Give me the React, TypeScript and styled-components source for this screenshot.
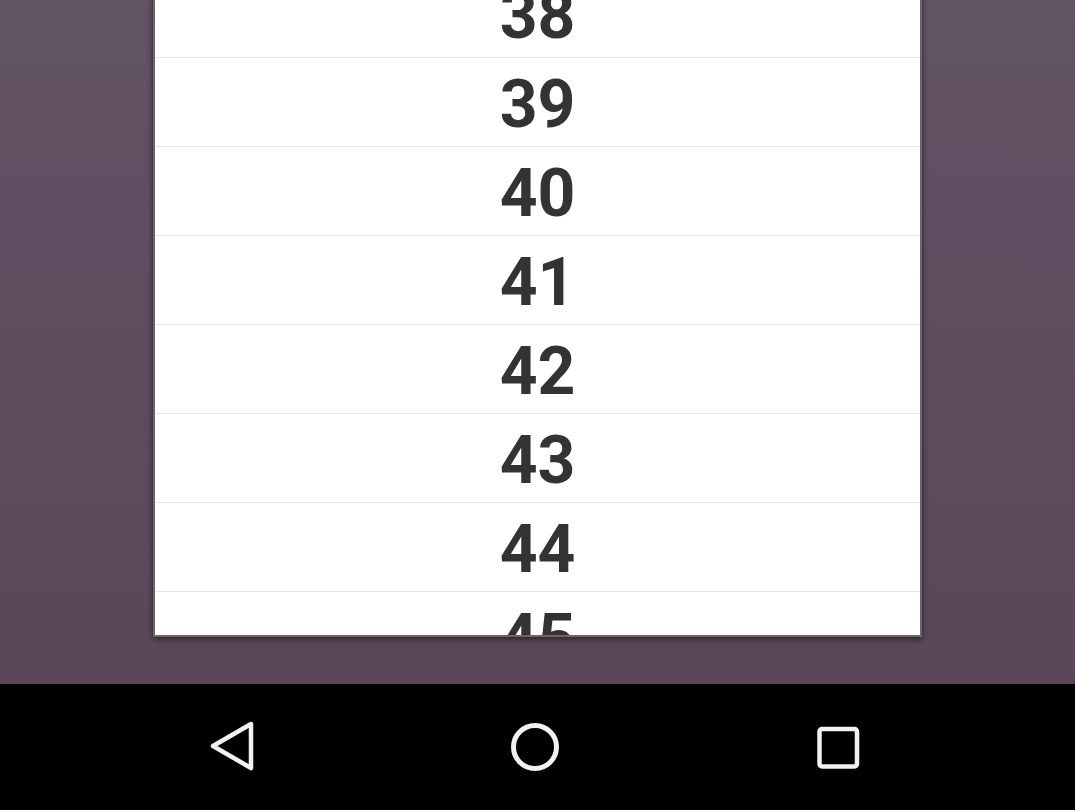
import React from "react";
import styled, { createGlobalStyle } from "styled-components";

const Global = createGlobalStyle`
  html, body { margin: 0; padding: 0; }
  body { font-family: Roboto, "Noto Sans", sans-serif; background: #000; }
`;

const Screen = styled.div`
  width: 1075px;
  height: 810px;
  display: flex;
  flex-direction: column;
  overflow: hidden;
`;

const Content = styled.div`
  height: 684px;
  flex: none;
  display: flex;
  flex-direction: column;
  justify-content: flex-end;
  align-items: flex-start;
  padding: 0 0 47px 153px;
  box-sizing: border-box;
  overflow: hidden;
  background: linear-gradient(180deg, #625365 0%, #5e4c5f 50%, #5a4659 100%);
`;

const Card = styled.div`
  flex: none;
  width: 765px;
  height: 666px;
  background: #fff;
  border: 2px solid #6a666a;
  border-top: none;
  box-shadow: 0 3px 6px rgba(0, 0, 0, 0.35), 0 0 5px rgba(0, 0, 0, 0.3);
  overflow: hidden;
  display: flex;
  flex-direction: column;
`;

const Row = styled.div`
  flex: none;
  height: 82px;
  padding-top: 6px;
  border-bottom: 1px solid #e4e4e4;
  display: flex;
  align-items: center;
  justify-content: center;
  font-family: Roboto, "Noto Sans", sans-serif;
  font-weight: 700;
  font-size: 66px;
  color: #333333;
  line-height: 1;
`;

const Nav = styled.div`
  flex: 1;
  background: #000;
  display: flex;
  align-items: center;
  padding-left: 182px;
  gap: 203px;
`;

const NavButton = styled.div`
  width: 100px;
  height: 100px;
  display: flex;
  align-items: center;
  justify-content: center;
`;

const numbers = [38, 39, 40, 41, 42, 43, 44, 45];

export default function App() {
  return (
    <>
      <Global />
      <Screen>
        <Content>
          <Card>
            {numbers.map((n) => (
              <Row key={n}>{n}</Row>
            ))}
          </Card>
        </Content>
        <Nav>
          <NavButton>
            <svg width="60" height="60" viewBox="0 0 60 60">
              <path
                d="M49 7 L11 29 L49 51 Z"
                fill="none"
                stroke="#f2f2f2"
                strokeWidth="4.5"
                strokeLinejoin="round"
              />
            </svg>
          </NavButton>
          <NavButton>
            <svg width="60" height="60" viewBox="0 0 60 60">
              <circle cx="30" cy="30" r="21.5" fill="none" stroke="#f2f2f2" strokeWidth="5" />
            </svg>
          </NavButton>
          <NavButton>
            <svg width="60" height="60" viewBox="0 0 60 60">
              <rect
                x="11.5"
                y="12"
                width="37.5"
                height="37.5"
                rx="2.5"
                fill="none"
                stroke="#f2f2f2"
                strokeWidth="4.5"
              />
            </svg>
          </NavButton>
        </Nav>
      </Screen>
    </>
  );
}
